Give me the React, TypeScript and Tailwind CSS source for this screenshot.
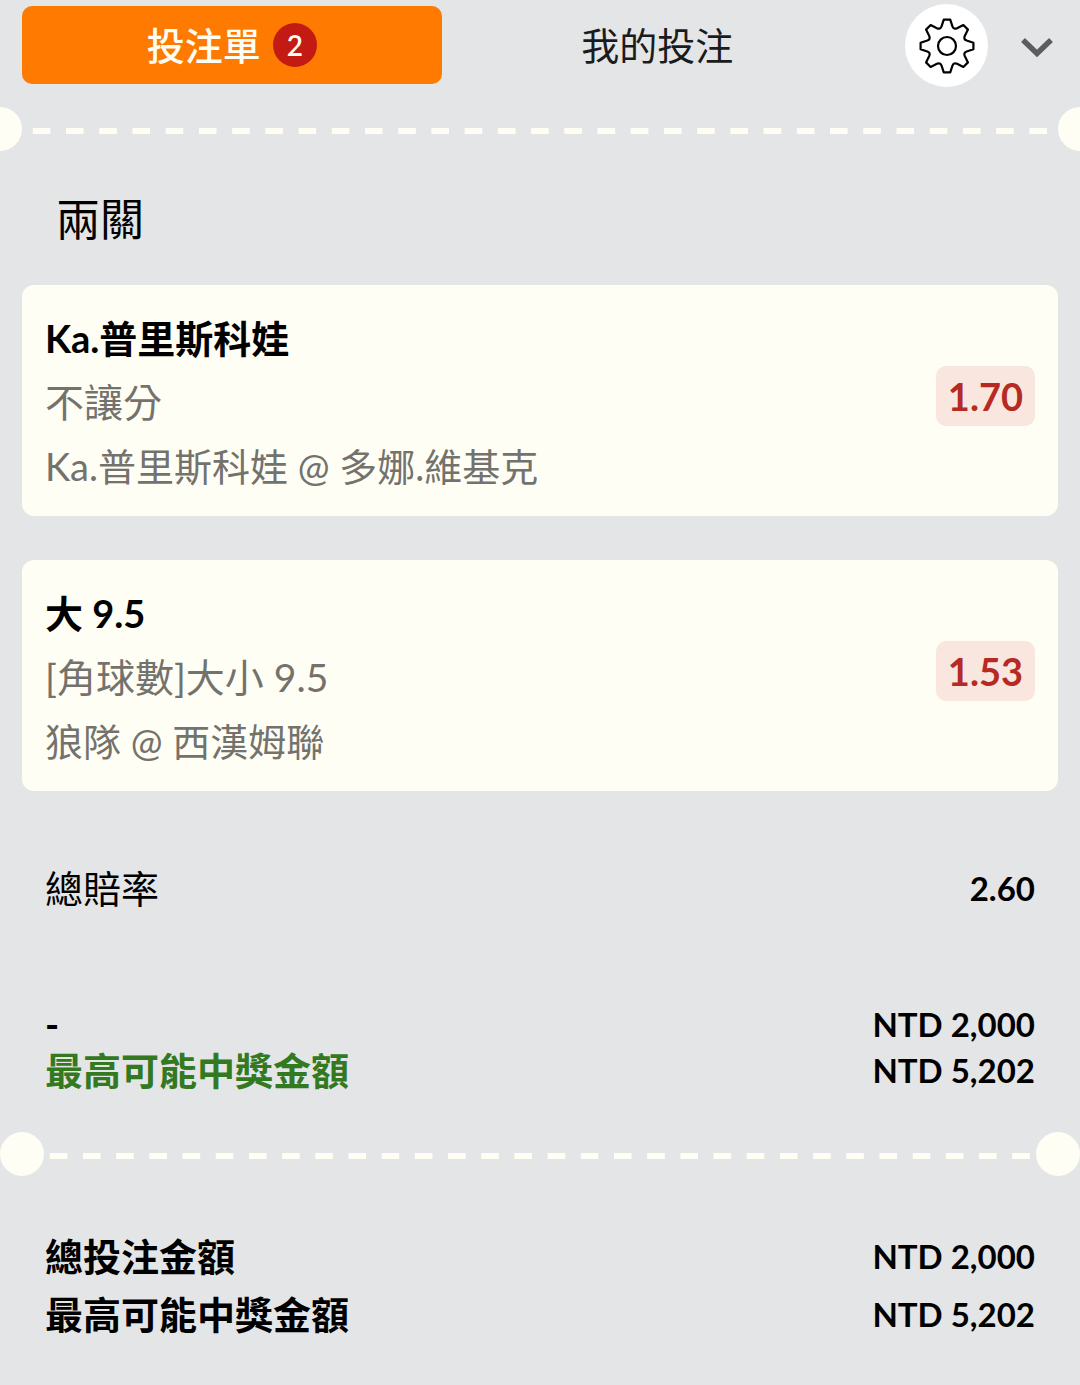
const bets = [
  { pick: "Ka.普里斯科娃", market: "不讓分", match: "Ka.普里斯科娃 @ 多娜.維基克", odds: "1.70" },
  { pick: "大 9.5", market: "[角球數]大小 9.5", match: "狼隊 @ 西漢姆聯", odds: "1.53" },
];

const polar = (deg: number, r: number) => {
  const a = (deg * Math.PI) / 180;
  return `${(28 + r * Math.sin(a)).toFixed(2)} ${(28 - r * Math.cos(a)).toFixed(2)}`;
};

// eight teeth joined by small rounded valleys
const GEAR_PATH =
  [0, 45, 90, 135, 180, 225, 270, 315]
    .map(
      (a, i) =>
        `${i === 0 ? "M" : "L"}${polar(a - 7, 26.6)}L${polar(a + 7, 26.6)}L${polar(a + 15.5, 20.4)}Q${polar(a + 22.5, 17.6)} ${polar(a + 29.5, 20.4)}`
    )
    .join("") + "Z";

function GearIcon() {
  return (
    <svg className="w-14 h-14" viewBox="0 0 56 56" fill="none" stroke="#000" strokeWidth={2.2} strokeLinejoin="round">
      <path d={GEAR_PATH} />
      <circle cx="28" cy="28" r="9" />
    </svg>
  );
}

function ChevronIcon() {
  return (
    <svg className="w-9 h-9" viewBox="0 0 36 36" fill="none" stroke="#5c5d60" strokeWidth={5.5}>
      <path d="M3 12l14 13.5L31 12" />
    </svg>
  );
}

function Perforation() {
  return (
    <>
      <span className="size-11 rounded-full bg-[#fffef5]" />
      <span className="flex-1 h-1.5 mt-1 -mx-0.5 bg-[linear-gradient(90deg,transparent_8px,#fffef5_8px,#fffef5_25px,transparent_25px)] bg-[length:33px_6px] bg-repeat-round" />
      <span className="size-11 rounded-full bg-[#fffef5]" />
    </>
  );
}

export default function App() {
  return (
    <main className="min-h-screen bg-[#e4e5e7] text-black font-['Lato','Noto_Sans_CJK_TC',sans-serif] text-[38px] leading-[64px] overflow-hidden">
      <header className="flex items-center pl-[22px] pr-6 pt-1">
        <nav className="flex flex-1 gap-1.5 pb-0.5">
          <button className="flex flex-1 items-center justify-center gap-3 h-[78px] rounded-[10px] bg-[#ff7a00] text-[#fffef5] font-medium">
            投注單
            <span className="flex items-center justify-center size-11 rounded-full bg-[#c41a14] text-[28px] font-semibold">2</span>
          </button>
          <button className="flex-1 h-[78px] text-[#1a1b1d]">我的投注</button>
        </nav>
        <button aria-label="設定" className="flex items-center justify-center size-[83px] ml-[38px] rounded-full bg-white">
          <GearIcon />
        </button>
        <button aria-label="收合" className="ml-8">
          <ChevronIcon />
        </button>
      </header>

      <div className="flex items-center justify-between mt-5 -mx-[22px] gap-[5px]">
        <Perforation />
      </div>

      <section className="px-[22px] pt-9">
        <h1 className="px-[34px] text-[44px] mb-[34px]">兩關</h1>
        <ul className="flex flex-col gap-11">
          {bets.map((bet) => (
            <li key={bet.pick} className="flex items-center justify-between rounded-xl bg-[#fffef5] px-[23px] pt-[21px] pb-[18px]">
              <div className="text-[#73726d]">
                <h2 className="font-bold text-black">{bet.pick}</h2>
                <p className="text-[39px]">{bet.market}</p>
                <p>{bet.match}</p>
              </div>
              <span className="mb-3 rounded-[10px] bg-[#f8e6df] px-3 leading-[60px] font-bold text-[#b52a22]">{bet.odds}</span>
            </li>
          ))}
        </ul>
      </section>

      <dl className="px-[45px]">
        <div className="flex items-center justify-between mt-[65px]">
          <dt>總賠率</dt>
          <dd className="text-[33px] font-bold">2.60</dd>
        </div>
        <div className="flex items-center justify-between mt-[81px] leading-[46px] font-bold">
          <dt>-</dt>
          <dd className="text-[33px]">NTD 2,000</dd>
        </div>
        <div className="flex items-center justify-between leading-[46px] font-bold">
          <dt className="text-[#33791f]">最高可能中獎金額</dt>
          <dd className="text-[33px]">NTD 5,202</dd>
        </div>
      </dl>

      <div className="flex items-center justify-between mt-[39px]">
        <Perforation />
      </div>

      <dl className="px-[45px] mt-[51px] leading-[58px] font-bold">
        <div className="flex items-center justify-between">
          <dt>總投注金額</dt>
          <dd className="text-[33px]">NTD 2,000</dd>
        </div>
        <div className="flex items-center justify-between">
          <dt>最高可能中獎金額</dt>
          <dd className="text-[33px]">NTD 5,202</dd>
        </div>
      </dl>
    </main>
  );
}
